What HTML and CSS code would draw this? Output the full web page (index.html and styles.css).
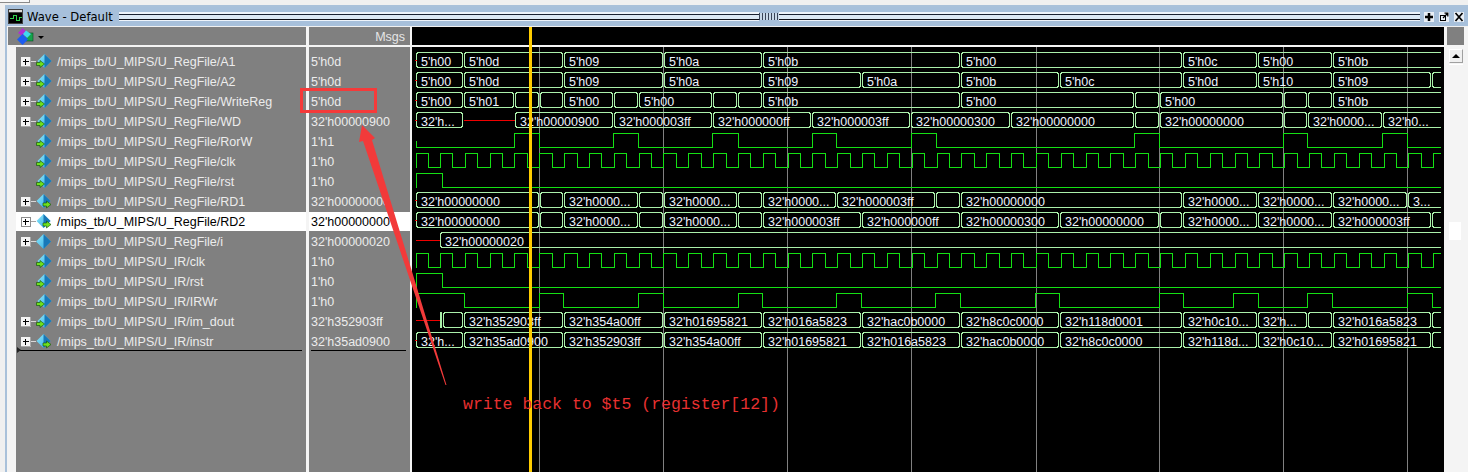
FILE: index.html
```html
<!DOCTYPE html>
<html lang="en">
<head>
<meta charset="utf-8">
<title>Wave - Default</title>
<link rel="stylesheet" href="styles.css">
</head>
<body>
<svg class="defs" width="0" height="0" aria-hidden="true">
  <defs>
    <linearGradient id="dl" x1="0" y1="0" x2="1" y2="1"><stop offset="0" stop-color="#8fe8fb"/><stop offset="1" stop-color="#2aa6e0"/></linearGradient>
    <symbol id="plus" viewBox="0 0 15 10">
      <rect x="0" y="0" width="10" height="10" fill="#f4f4f4"/>
      <path d="M9.5 0v9.5H0" fill="none" stroke="#a8a8a8"/>
      <path d="M2 4.5h6M4.500 2v6" stroke="#000" fill="none" shape-rendering="crispEdges"/>
      <path d="M10 4.500h5" stroke="#d8d8d8" fill="none" shape-rendering="crispEdges"/>
    </symbol>
    <symbol id="plus-sel" viewBox="0 0 15 10">
      <rect x=".5" y=".5" width="9" height="9" fill="#fff" stroke="#8c8c8c"/>
      <path d="M2 4.500h6M4.500 2v6" stroke="#000" fill="none" shape-rendering="crispEdges"/>
      <path d="M10 4.500h5" stroke="#a0a0a0" fill="none" shape-rendering="crispEdges"/>
    </symbol>
    <symbol id="sig-in" viewBox="0 0 16 16">
      <path d="M8.500 0 15.500 7 8.500 14 1.500 7Z" fill="url(#dl)"/>
      <path d="M8.500 0 15.500 7 8.500 14Z" fill="#1878b8"/>
      <path d="M.5 8.500h3.500V6.500l4.500 3.500-4.500 3.500v-2H.5Z" fill="#6ee01e" stroke="#0a4a0a" stroke-width=".6"/>
    </symbol>
    <symbol id="sig-out" viewBox="0 0 16 16">
      <path d="M7.500 0 14.500 7 7.500 14 .5 7Z" fill="url(#dl)"/>
      <path d="M7.500 0 14.500 7 7.500 14Z" fill="#1878b8"/>
      <path d="M7 9h3.500V7l4.500 3.500-4.500 3.500v-2H7Z" fill="#6ee01e" stroke="#0a4a0a" stroke-width=".6"/>
    </symbol>
    <symbol id="sig-int" viewBox="0 0 16 16">
      <path d="M7.500 0 15 7.500 7.500 15 0 7.500Z" fill="url(#dl)"/>
      <path d="M7.500 0 15 7.500 7.500 15Z" fill="#1878b8"/>
    </symbol>
  </defs>
</svg>

<div class="tabstrip"><div class="tab"></div></div>

<div class="window">
  <header class="titlebar">
    <svg class="title-icon" width="15" height="15" viewBox="0 0 15 15">
      <rect width="15" height="15" fill="#404040"/>
      <rect x="1" y="1" width="13" height="2" fill="#d8d8d8"/>
      <rect x="1" y="4" width="13" height="10" fill="#000"/>
      <path d="M2 9.500h3v-3h3v5h3v-3h3" fill="none" stroke="#2fd04a" shape-rendering="crispEdges"/>
    </svg>
    <span class="title-text">Wave - Default</span>
    <div class="grip"></div>
    <div class="knurl"></div>
    <div class="grip"></div>
    <div class="title-buttons">
      <svg class="title-btn" viewBox="0 0 10 10"><path d="M5 1v8M1 5h8" stroke="#000" stroke-width="2.500"/></svg>
      <svg class="title-btn" viewBox="0 0 10 10"><rect x="1.500" y="3.500" width="5" height="5" fill="none" stroke="#000"/><path d="M4 6 8.500 1.500M5.500 1.200h3.300V4.500" fill="none" stroke="#000" stroke-width="1.300"/></svg>
      <svg class="title-btn" viewBox="0 0 10 10"><path d="M1.500 1 8.500 9M8.500 1 1.500 9" stroke="#000" stroke-width="1.700"/></svg>
    </div>
  </header>

  <main class="panes">
    <section class="col names">
      <div class="col-head tool-head">
        <svg width="17" height="17" viewBox="0 0 17 17">
          <rect x="9" y="5" width="7" height="8" fill="#16a34a" stroke="#0a4a22" stroke-width=".6"/>
          <path d="M5.500 0 11 5 5.500 8 1 5Z" fill="#b030d0"/>
          <path d="M9 2.500 14 6 10 10 6 6Z" fill="#40d8f0"/>
          <path d="M5.500 6 11 11.500 5.500 17 0 11.500Z" fill="#1c5cf0"/>
        </svg>
        <span class="caret"></span>
      </div>
      <div class="list">
        <div class="row"><svg class="exp"><use href="#plus"/></svg><svg class="sig"><use href="#sig-in"/></svg><span>/mips_tb/U_MIPS/U_RegFile/A1</span></div>
        <div class="row"><svg class="exp"><use href="#plus"/></svg><svg class="sig"><use href="#sig-in"/></svg><span>/mips_tb/U_MIPS/U_RegFile/A2</span></div>
        <div class="row"><svg class="exp"><use href="#plus"/></svg><svg class="sig"><use href="#sig-in"/></svg><span>/mips_tb/U_MIPS/U_RegFile/WriteReg</span></div>
        <div class="row"><svg class="exp"><use href="#plus"/></svg><svg class="sig"><use href="#sig-in"/></svg><span>/mips_tb/U_MIPS/U_RegFile/WD</span></div>
        <div class="row"><div class="exp"></div><svg class="sig"><use href="#sig-in"/></svg><span>/mips_tb/U_MIPS/U_RegFile/RorW</span></div>
        <div class="row"><div class="exp"></div><svg class="sig"><use href="#sig-in"/></svg><span>/mips_tb/U_MIPS/U_RegFile/clk</span></div>
        <div class="row"><div class="exp"></div><svg class="sig"><use href="#sig-in"/></svg><span>/mips_tb/U_MIPS/U_RegFile/rst</span></div>
        <div class="row"><svg class="exp"><use href="#plus"/></svg><svg class="sig"><use href="#sig-out"/></svg><span>/mips_tb/U_MIPS/U_RegFile/RD1</span></div>
        <div class="row selected"><svg class="exp"><use href="#plus-sel"/></svg><svg class="sig"><use href="#sig-out"/></svg><span>/mips_tb/U_MIPS/U_RegFile/RD2</span></div>
        <div class="row"><svg class="exp"><use href="#plus"/></svg><svg class="sig"><use href="#sig-int"/></svg><span>/mips_tb/U_MIPS/U_RegFile/i</span></div>
        <div class="row"><div class="exp"></div><svg class="sig"><use href="#sig-in"/></svg><span>/mips_tb/U_MIPS/U_IR/clk</span></div>
        <div class="row"><div class="exp"></div><svg class="sig"><use href="#sig-in"/></svg><span>/mips_tb/U_MIPS/U_IR/rst</span></div>
        <div class="row"><div class="exp"></div><svg class="sig"><use href="#sig-in"/></svg><span>/mips_tb/U_MIPS/U_IR/IRWr</span></div>
        <div class="row"><svg class="exp"><use href="#plus"/></svg><svg class="sig"><use href="#sig-in"/></svg><span>/mips_tb/U_MIPS/U_IR/im_dout</span></div>
        <div class="row"><svg class="exp"><use href="#plus"/></svg><svg class="sig"><use href="#sig-out"/></svg><span>/mips_tb/U_MIPS/U_IR/instr</span></div>
        <div class="endline name-end"></div>
      </div>
    </section>

    <section class="col values">
      <div class="col-head msgs">Msgs</div>
      <div class="list">
        <div class="row">5'h0d</div>
        <div class="row">5'h0d</div>
        <div class="row">5'h0d</div>
        <div class="row">32'h00000900</div>
        <div class="row">1'h1</div>
        <div class="row">1'h0</div>
        <div class="row">1'h0</div>
        <div class="row">32'h00000000</div>
        <div class="row selected">32'h00000000</div>
        <div class="row">32'h00000020</div>
        <div class="row">1'h0</div>
        <div class="row">1'h0</div>
        <div class="row">1'h0</div>
        <div class="row">32'h352903ff</div>
        <div class="row">32'h35ad0900</div>
        <div class="endline value-end"></div>
      </div>
    </section>

    <section class="wave">
      <svg id="wave" class="wave-svg" width="1032" height="445" viewBox="412 27 1032 445"></svg>
    </section>

    <aside class="scroll">
      <div class="scroll-head"></div>
      <div class="scroll-track">
        <div class="scroll-up"></div>
        <div class="scroll-thumb"></div>
        <div class="scroll-mark"></div>
      </div>
    </aside>
  </main>
</div>

<svg class="notes" width="1468" height="472" viewBox="0 0 1468 472">
  <rect class="note-box" x="301.500" y="89.500" width="74" height="22"/>
  <polygon class="note-arrow" points="362,125 375,138 372,140 446.500,385 445.500,385 363,141 359,142"/>
  <text class="note-text" x="463" y="409">write back to $t5 (register[12])</text>
</svg>

<script src="script.js"></script>
</body>
</html>
```
FILE: styles.css
```css
* { box-sizing: border-box; }
html, body { margin: 0; padding: 0; }
body {
  width: 1468px;
  height: 472px;
  overflow: hidden;
  position: relative;
  background: #f0f0f0;
  font-family: "Liberation Sans", Arial, sans-serif;
  font-size: 12.500px;
}
.defs { position: absolute; }

.tabstrip { height: 5px; }
.tab {
  width: 30px;
  height: 3px;
  background: #f8f8f8;
  border-right: 1px solid #8a8a8a;
  border-bottom: 1px solid #8a8a8a;
}

.window {
  margin-left: 5px;
  height: 467px;
  display: flex;
  flex-direction: column;
  border-left: 2px solid #a9c1da;
  border-top: 2px solid #a9c1da;
}

.titlebar {
  height: 19px;
  flex: none;
  display: flex;
  align-items: center;
  background: #a7c0db;
  padding-left: 1px;
}
.title-icon { flex: none; }
.title-text {
  margin-left: 4px;
  margin-right: 6px;
  font-family: "DejaVu Sans", sans-serif;
  font-size: 11.600px;
  color: #000;
  white-space: nowrap;
}
.grip {
  flex: 1;
  height: 9px;
  background: linear-gradient(#eef4fb 0 2px, #1a2030 2px 3px, #dce8f4 3px 7px, #101018 7px 8px, #eef4fb 8px 9px);
}
.knurl {
  width: 20px;
  height: 7px;
  flex: none;
  background: repeating-linear-gradient(90deg, #3a4458 0 1px, #c8d8e8 1px 3px);
}
.title-buttons {
  display: flex;
  gap: 5px;
  width: 48px;
  padding-left: 4px;
  flex: none;
}
.title-btn { width: 10px; height: 10px; flex: none; background: #e8eef5; }

.panes {
  margin-top: 1px;
  flex: 1;
  display: flex;
  background: #f4f4f4;
  overflow: hidden;
}
.col { display: flex; flex-direction: column; flex: none; }
.names { width: 299px; margin-right: 3px; }
.values { width: 101px; margin-right: 2px; }

.col-head {
  height: 18px;
  margin-bottom: 2px;
  background: #808080;
  flex: none;
}
.names .col-head { margin-left: 1px; }
.tool-head {
  display: flex;
  align-items: center;
  padding-left: 9px;
}
.caret {
  margin-left: 4px;
  margin-top: 2px;
  border-left: 3px solid transparent;
  border-right: 3px solid transparent;
  border-top: 3px solid #000;
}
.msgs {
  text-align: right;
  padding-right: 5px;
  line-height: 20px;
  color: #e6e6e6;
}

.list {
  flex: 1;
  padding-top: 5px;
  background: #808080;
  color: #ececec;
}
.names .list { margin-left: 9px; }

.row {
  height: 20px;
  display: flex;
  align-items: center;
  white-space: nowrap;
}
.names .row { padding-left: 5px; }
.values .row { padding-left: 2px; }
.row.selected {
  background: linear-gradient(#fff, #fff) no-repeat;
  background-size: 100% 19px;
  color: #000;
}

.exp { width: 15px; height: 10px; flex: none; }
.sig { width: 16px; height: 16px; flex: none; margin-right: 5px; }

.endline {
  height: 1px;
  background: #000;
  margin-top: -2px;
  position: relative;
}
.name-end { margin-left: 4px; margin-right: 4px; }
.name-end::before {
  content: "";
  position: absolute;
  left: -3px;
  top: -3px;
  border-left: 4px solid #222;
  border-top: 3px solid transparent;
  border-bottom: 3px solid transparent;
}
.value-end { margin-left: 2px; margin-right: 4px; }

.wave { width: 1032px; flex: none; background: #000; }
.wave-svg { display: block; font-family: "Liberation Sans", Arial, sans-serif; font-size: 12.500px; }
.grid { stroke: #808080; shape-rendering: crispEdges; }
.bus { fill: none; stroke: #aaf0aa; shape-rendering: crispEdges; }
.bit { fill: none; stroke: #14e014; shape-rendering: crispEdges; }
.undef { fill: none; stroke: #f00000; shape-rendering: crispEdges; }
.bus-label { fill: #eef4ff; }
.cursor { fill: #ffcc00; }
.head-line { fill: #f4f4f4; }

.scroll { width: 24px; flex: none; display: flex; flex-direction: column; padding-left: 3px; }
.scroll-head { height: 18px; width: 17px; background: #808080; flex: none; }
.scroll-track {
  flex: 1;
  margin-top: 2px;
  width: 17px;
  padding: 2px 1px 0 2px;
  display: flex;
  flex-direction: column;
}
.scroll-up {
  height: 14px;
  flex: none;
  background: #f0f0f0;
  border: 1px solid #fff;
  border-right-color: #a0a0a0;
  border-bottom-color: #a0a0a0;
  display: flex;
  align-items: center;
  justify-content: center;
}
.scroll-up::before {
  content: "";
  border-left: 4px solid transparent;
  border-right: 4px solid transparent;
  border-bottom: 4px solid #000;
}
.scroll-thumb { height: 158px; flex: none; border-top: 1px solid #fff; margin-top: 1px; }
.scroll-mark { height: 18px; width: 12px; flex: none; background: #fff; }

.notes { position: absolute; left: 0; top: 0; pointer-events: none; }
.note-box { fill: none; stroke: #f53a3a; stroke-width: 3; }
.note-arrow { fill: #f23a3a; }
.note-text { fill: #e83030; font-family: "Liberation Mono", monospace; font-size: 16.500px; }
```
FILE: script.js
```js
// Waveform data: each bus row lists [start x, label]; last entry gives the end.
var NS = "http://www.w3.org/2000/svg";
var svg = document.getElementById("wave");
var END = 1441;

function add(name, attrs, text) {
  var el = document.createElementNS(NS, name);
  for (var k in attrs) el.setAttribute(k, attrs[k]);
  if (text) el.textContent = text;
  svg.appendChild(el);
}

var H = "32'h0000...";
var buses = [
  [0, [[416,"5'h00"],[464,"5'h0d"],[564,"5'h09"],[664,"5'h0a"],[763,"5'h0b"],[961,"5'h00"],[1183,"5'h0c"],[1258,"5'h00"],[1333,"5'h0b"]]],
  [1, [[416,"5'h00"],[464,"5'h0d"],[564,"5'h09"],[664,"5'h0a"],[763,"5'h09"],[862,"5'h0a"],[961,"5'h0b"],[1060,"5'h0c"],[1183,"5'h0d"],[1258,"5'h10"],[1333,"5'h09"],[1432,""]]],
  [2, [[416,"5'h00"],[464,"5'h01"],[515,""],[540,""],[564,"5'h00"],[614,""],[639,"5'h00"],[713,""],[738,""],[763,"5'h0b"],[961,"5'h00"],[1135,""],[1160,"5'h00"],[1284,""],[1308,""],[1333,"5'h0b"]]],
  [3, [[416,"32'h...",464],[515,"32'h00000900"],[614,"32'h000003ff"],[713,"32'h000000ff"],[812,"32'h000003ff"],[911,"32'h00000300"],[1011,"32'h00000000"],[1135,""],[1160,"32'h00000000"],[1284,""],[1308,H],[1383,"32'h0..."]]],
  [7, [[416,"32'h00000000"],[540,""],[564,H],[639,""],[664,H],[738,""],[763,H],[837,"32'h000003ff"],[936,""],[961,"32'h00000000"],[1183,H],[1258,H],[1333,H],[1408,"3..."]]],
  [8, [[416,"32'h00000000"],[540,""],[564,H],[639,""],[664,H],[738,""],[763,"32'h000003ff"],[862,"32'h000000ff"],[961,"32'h00000300"],[1060,"32'h00000000"],[1160,""],[1183,H],[1258,H],[1333,"32'h000003ff"],[1432,""]]],
  [9, [[440,"32'h00000020"]]],
  [13, [[440,""],[443,""],[464,"32'h352903ff"],[564,"32'h354a00ff"],[664,"32'h01695821"],[763,"32'h016a5823"],[862,"32'hac0b0000"],[961,"32'h8c0c0000"],[1060,"32'h118d0001"],[1183,"32'h0c10..."],[1258,"32'h..."],[1308,""],[1333,"32'h016a5823"],[1432,""]]],
  [14, [[416,"32'h...",464],[464,"32'h35ad0900"],[564,"32'h352903ff"],[664,"32'h354a00ff"],[763,"32'h01695821"],[862,"32'h016a5823"],[961,"32'hac0b0000"],[1060,"32'h8c0c0000"],[1183,"32'h118d..."],[1258,"32'h0c10..."],[1333,"32'h01695821"],[1432,""]]]
];

// Red "unknown" stretches before a bus is driven: [row, from, to]
var reds = [[3,464,515],[9,416,440],[13,416,440]];

// Single-bit rows: [row, list of toggling x positions, starts high?]
var CLK = [];
for (var k = -5; k <= 37; k++) {
  var r = 539.3 + 24.83 * k;
  if (r > 417) CLK.push(Math.round(r));
  CLK.push(Math.round(r + 12.4));
}
CLK = CLK.filter(function (x) { return x < END; });

var bits = [
  [4, [514,539,613,638,712,738,812,836,911,936,1134,1159,1283,1307,1382,1407], false],
  [5, CLK, true],
  [6, [442], true],
  [10, CLK, true],
  [11, [442], true],
  [12, [464,539,563,638,663,738,762,836,861,935,960,1035,1059,1159,1183,1233,1258,1307,1332,1407,1432], true]
];

// background
[539,663,787,911,1036,1159,1283,1407].forEach(function (x) {
  add("line", { "class": "grid", x1: x + 0.5, x2: x + 0.5, y1: 47, y2: 472 });
});
add("rect", { "class": "head-line", x: 412, y: 45, width: 1032, height: 2 });

// bit rows
bits.forEach(function (b) {
  var top = 133.5 + (b[0] - 4) * 20, bot = top + 14, y = b[2] ? top : bot;
  var d = "M416.5 " + (b[2] ? bot : top + 7) + "V" + y;
  b[1].forEach(function (x) {
    y = y === top ? bot : top;
    d += "H" + (x + 0.5) + "V" + y;
  });
  d += "H" + END;
  add("path", { "class": "bit", d: d });
});

// bus rows
buses.forEach(function (b) {
  var row = b[0], segs = b[1];
  var top = 52.5 + row * 20, bot = top + 15;
  var mid = 60.5 + row * 20;
  segs.forEach(function (s, i) {
    var a = s[0];
    var open = i === segs.length - 1;
    var e = s[2] || (open ? END : segs[i + 1][0]);
    var d;
    if (open) {
      d = "M" + e + " " + top + "H" + (a + 1.5) + "L" + (a + 0.5) + " " + (top + 2) +
          "V" + (bot - 2) + "L" + (a + 1.5) + " " + bot + "H" + e;
    } else {
      d = "M" + (a + 1.5) + " " + top + "H" + (e - 2.5) + "L" + (e - 1.5) + " " + (top + 2) +
          "V" + (bot - 2) + "L" + (e - 2.5) + " " + bot + "H" + (a + 1.5) +
          "L" + (a + 0.5) + " " + (bot - 2) + "V" + (top + 2) + "Z";
    }
    add("path", { "class": "bus", d: d });
    if (s[1]) add("text", { "class": "bus-label", x: a + 5, y: 66 + row * 20 }, s[1]);
  });
  if (segs[0][0] === 416) add("line", { "class": "undef", x1: 415, x2: 417, y1: mid, y2: mid });
});

reds.forEach(function (r) {
  var y = 60.5 + r[0] * 20;
  add("line", { "class": "undef", x1: r[1], x2: r[2], y1: y, y2: y });
});

// cursor
add("rect", { "class": "cursor", x: 529, y: 27, width: 3, height: 445 });
```
